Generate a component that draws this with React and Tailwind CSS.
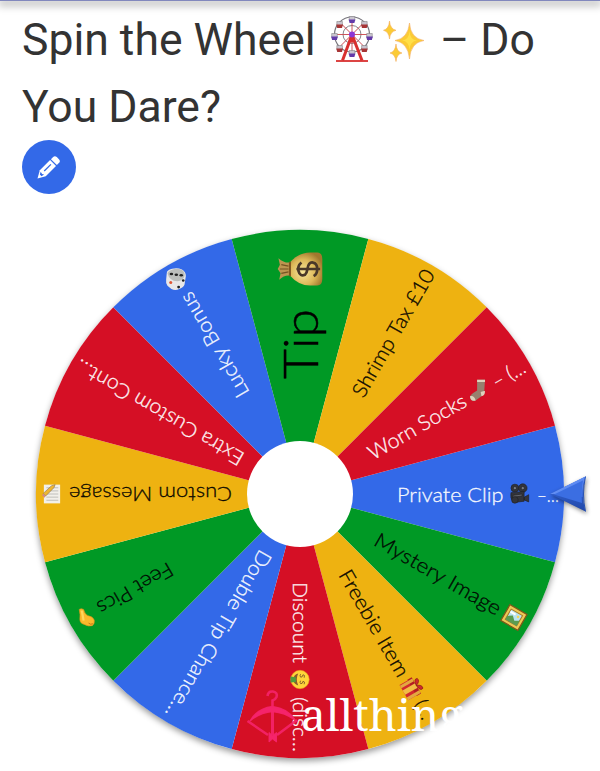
import React from "react";

const BLUE = "#3369e8";
const GREEN = "#009925";
const YELLOW = "#eeb211";
const RED = "#d50f25";

const RADIUS = 264;

// from / to are distances from the hub along the slice's centre line
const slices = [
  { angle: 0, color: BLUE, parts: [{ text: "Private Clip", from: 97, to: 203.5 }, { text: "–…", from: 237, to: 259 }], icon: { Art: Camera, at: 219.5, size: 21 } },
  { angle: 30, color: GREEN, parts: [{ text: "Mystery Image", from: 88, to: 231 }], icon: { Art: Picture, at: 247, size: 21 } },
  { angle: 60, color: YELLOW, parts: [{ text: "Freebie Item", from: 89, to: 209 }, { text: "(…", from: 239, to: 258 }], icon: { Art: Gift, at: 224, size: 20 } },
  { angle: 90, color: RED, parts: [{ text: "Discount", from: 88, to: 169 }, { text: "(disc…", from: 203, to: 258 }], icon: { Art: MoneyFace, at: 185.5, size: 19 } },
  { angle: 120, color: BLUE, parts: [{ text: "Double Tip Chance…", from: 67, to: 258 }] },
  { angle: 150, color: GREEN, parts: [{ text: "Feet Pics", from: 148, to: 232 }], icon: { Art: Foot, at: 247, size: 20 } },
  { angle: 180, color: YELLOW, parts: [{ text: "Custom Message", from: 68, to: 231 }], icon: { Art: Memo, at: 248, size: 20 } },
  { angle: 210, color: RED, parts: [{ text: "Extra Custom Cont…", from: 67, to: 258 }] },
  { angle: 240, color: BLUE, parts: [{ text: "Lucky Bonus", from: 113, to: 231 }], icon: { Art: Dice, at: 248, size: 21 } },
  { angle: 270, color: GREEN, parts: [{ text: "Tip", from: 115, to: 185, big: true }], icon: { Art: MoneyBag, at: 225, size: 46 } },
  { angle: 300, color: YELLOW, parts: [{ text: "Shrimp Tax £10", from: 114, to: 258 }] },
  { angle: 330, color: RED, parts: [{ text: "Worn Socks", from: 80, to: 190 }, { text: "– (…", from: 223, to: 258 }], icon: { Art: Sock, at: 207, size: 23 } },
];

const rad = (deg) => (deg * Math.PI) / 180;

export default function App() {
  return (
    <div className="w-[600px] h-[771px] overflow-hidden bg-white flex flex-col font-[Roboto,sans-serif]">
      <div className="h-px shrink-0 bg-[#8288bd] shadow-[0_2px_8px_2px_rgba(0,0,0,0.35)]" />

      <header className="h-[213px] shrink-0 pl-[22px] pt-1.5">
        <h1 className="text-[44.5px] leading-[67px] text-[#333] whitespace-nowrap">
          <span className="flex items-center">
            <span className="w-[309px]">Spin the Wheel</span>
            <FerrisWheel />
            <Sparkles />
            <span className="ml-[15px]">– Do</span>
          </span>
          <span className="block">You Dare?</span>
        </h1>
        <button className="block -mt-px w-[54px] h-[54px] rounded-full bg-[#3369e8] cursor-pointer" aria-label="Edit">
          <PencilIcon />
        </button>
      </header>

      <main className="h-[557px] shrink-0">
        <Wheel />
      </main>
    </div>
  );
}

function Wheel() {
  return (
    <svg width="600" height="557" viewBox="0 214 600 557" className="block">
      <defs>
        <linearGradient id="pointerTop" x1="0" y1="0" x2="1" y2="1">
          <stop offset="0" stopColor="#7fa6fb" />
          <stop offset="1" stopColor="#3f72ea" />
        </linearGradient>
        <linearGradient id="pointerBottom" x1="0" y1="0" x2="0" y2="1">
          <stop offset="0" stopColor="#396bdf" />
          <stop offset="1" stopColor="#2148a8" />
        </linearGradient>
        <radialGradient id="gold" cx="0.4" cy="0.4" r="0.65">
          <stop offset="0" stopColor="#f8e79a" />
          <stop offset="0.6" stopColor="#dcb858" />
          <stop offset="1" stopColor="#a1782e" />
        </radialGradient>
      </defs>

      <g transform="translate(300 494)">
        <circle r={RADIUS} fill="#fff" className="drop-shadow-[0_3px_3px_rgba(0,0,0,0.4)]" />
        {slices.map((s) => (
          <Slice key={s.angle} slice={s} />
        ))}
        <circle r="53" fill="#fff" />
      </g>

      <Pointer />
      <Watermark />
    </svg>
  );
}

function Slice({ slice }) {
  const { angle, color, parts, icon } = slice;
  const x = RADIUS * Math.cos(rad(15));
  const y = RADIUS * Math.sin(rad(15));
  const ink = color === BLUE || color === RED ? "#fff" : "#000";

  return (
    <g transform={`rotate(${angle})`}>
      <path d={`M0 0L${x} ${-y}A${RADIUS} ${RADIUS} 0 0 1 ${x} ${y}Z`} fill={color} />
      {parts.map((p) => (
        <text
          key={p.text}
          x={p.from}
          y={p.big ? 18 : 7.5}
          fill={ink}
          fillOpacity={p.big ? 1 : 0.92}
          stroke={ink}
          strokeWidth={p.big ? 0.5 : 0.3}
          fontSize={p.big ? 48 : 20.5}
          textLength={p.to - p.from}
          lengthAdjust="spacingAndGlyphs"
          className="font-[Lato,sans-serif] font-light"
        >
          {p.text}
        </text>
      ))}
      {icon && (
        <g transform={`translate(${icon.at} 0) scale(${icon.size / 32})`}>
          <icon.Art />
        </g>
      )}
    </g>
  );
}

function Pointer() {
  return (
    <g className="drop-shadow-[1px_2px_2px_rgba(0,0,0,0.45)]">
      <path d="M550 494L585.500 476.500Q580.500 494 585.500 511.500Z" fill="url(#pointerBottom)" />
      <path d="M550 494L585.500 476.500Q582 485 582.500 497Q568 494 550 494Z" fill="url(#pointerTop)" />
      <path d="M554 494.500L583 480.500Q581 491 582 503Z" fill="#3b6ee2" />
      <path d="M585.500 476.500Q581.500 494 585.500 511.500" fill="none" stroke="#2450b5" strokeWidth="1" />
    </g>
  );
}

function Watermark() {
  return (
    <g>
      <g fill="none" stroke="#f5246b" strokeOpacity="0.9" strokeWidth="2.2">
        <path d="M267.500 696Q268 691 273 691.500Q278 692.500 276.500 697Q275.500 699.500 272.500 700.500V706" strokeWidth="2.6" />
        <path d="M250 721Q257 708.500 272.500 706.500Q288 708.500 295 720Q285 712.500 272.500 711.500Q260 712.500 250 721Z" fill="#f5246b" strokeWidth="1.5" />
        <path d="M247.500 721L268 735M297 720L277 735" strokeWidth="2.500" />
        <path d="M272.500 711V735" strokeWidth="3" />
        <path d="M269 732.500L272.500 735.500L276.500 732.500V742L272.500 739L269 742Z" fill="#f5246b" strokeWidth="1" />
      </g>
      <text x="301" y="730.500" fill="#fff" fontSize="43" textLength="162" lengthAdjust="spacingAndGlyphs" className="font-['Noto_Serif','DejaVu_Serif',serif]">
        allthing
      </text>
    </g>
  );
}

function PencilIcon() {
  return (
    <svg viewBox="0 0 54 54" className="w-[54px] h-[54px]">
      <g transform="translate(15.500 38.500) rotate(-45)" fill="#fff">
        <path d="M0 0L7.500 -4.200H22V4.200H7.500Z" />
        <path d="M23.200 -4.200H26Q28.800 -4.200 28.800 -1.500V1.500Q28.800 4.200 26 4.200H23.200Z" />
        <path d="M10 -0.500H19.500" stroke="#3369e8" strokeWidth="1.300" />
        <path d="M4.500 -1.200L7 -2.500L6.500 0L7.500 1.800L4.500 1.200Z" fill="#3369e8" />
      </g>
    </svg>
  );
}

/* ---- Title pictures ---- */

function FerrisWheel() {
  const cabins = [0, 45, 90, 135, 180, 225, 270, 315];
  return (
    <svg viewBox="0 0 42 48" className="w-[42px] h-[48px] -mt-1">
      <g fill="none" stroke="#77757c">
        <circle cx="21" cy="19.500" r="17.500" strokeWidth="1.200" />
        <circle cx="21" cy="19.500" r="9" strokeWidth="0.900" />
      </g>
      {cabins.map((a) => (
        <path key={a} d="M21 19.500V3" stroke="#c8444a" strokeWidth="0.900" transform={`rotate(${a} 21 19.500)`} />
      ))}
      <path d="M20.500 21L11.500 45.500M21.500 21L31 45.500" stroke="#d8302f" strokeWidth="3" />
      <path d="M15 33L21 21L27 33L23.500 27.500H18.500Z" fill="#d8302f" />
      <path d="M5 46H37" stroke="#d8302f" strokeWidth="1.800" />
      {cabins.map((a, i) => {
        const cx = 21 + 17.5 * Math.sin(rad(a));
        const cy = 21.5 - 17 * Math.cos(rad(a));
        return (
          <g key={a} transform={`translate(${cx} ${cy})`}>
            <path d="M-2.800 -3H2.800V1H-2.800Z" fill="#c9c4cf" stroke="#777" strokeWidth="0.500" />
            <path d="M-3.300 0H3.300L2.400 3.500H-2.400Z" fill={i % 2 ? "#a73536" : "#633aa9"} />
          </g>
        );
      })}
      <circle cx="21" cy="19.500" r="3" fill="#8c35d5" />
    </svg>
  );
}

function Sparkles() {
  return (
    <svg viewBox="0 0 42 42" className="ml-[10px] w-[42px] h-[42px]">
      <g fill="#fbcb35" stroke="#f3ad62" strokeWidth="0.600">
        <path d="M26.500 3Q27.500 18.500 41 20.500Q27.500 22.500 26.500 39Q25 22.500 12 20.500Q25 18.500 26.500 3Z" />
        <path d="M6.500 1Q7.200 9 13 10.300Q7.200 11.600 6.500 19Q5.800 11.600 0.500 10.300Q5.800 9 6.500 1Z" />
        <path d="M13 24Q13.500 31.700 19 33Q13.500 34.300 13 41.500Q12.300 34.300 7 33Q12.300 31.700 13 24Z" />
      </g>
      <path d="M26.500 11Q27 20 34 20.500Q27 21 26.500 30Q26 21 19 20.500Q26 20 26.500 11Z" fill="#ffdf49" />
    </svg>
  );
}

/* ---- Slice pictures, each drawn in a 32 unit box around 0,0 ---- */

function Camera() {
  return (
    <g fill="#33343a" stroke="#202126">
      <circle cx="-7" cy="-9" r="6" />
      <circle cx="5" cy="-9" r="6.500" />
      <circle cx="-7" cy="-9" r="2.500" fill="#777b82" />
      <circle cx="5" cy="-9" r="2.500" fill="#777b82" />
      <path d="M-13 -2L7 -4V11L-9 13Q-15 6 -13 -2ZM7 5L14 1V12L7 9Z" />
      <path d="M-10 2L4 0V3L-10 5Z" fill="#64666d" />
      <circle cx="-7" cy="9" r="5" />
    </g>
  );
}

function Picture() {
  return (
    <g>
      <path d="M-15 -14H15V14H-15Z" fill="#edc855" stroke="#7c5819" strokeWidth="2" />
      <path d="M-10 -9H10V9H-10Z" fill="#b9e4f2" stroke="#a57a22" strokeWidth="1.500" />
      <path d="M-10 9V3L-3 -2L3 4L10 0V9Z" fill="#5a9c50" />
      <path d="M-9 -5H0" stroke="#fff" strokeWidth="3" />
      <circle cx="5" cy="-4" r="2" fill="#f5d75a" />
    </g>
  );
}

function Gift() {
  return (
    <g>
      <path d="M-14 -4H14V15H-14Z" fill="#d3292c" />
      <path d="M-15 -8H15V0H-15Z" fill="#b31e22" />
      <path d="M-4 -8H4V15H-4Z" fill="#f1bd44" />
      <path d="M9 -8H14V15H9ZM-13 -8H-8V15H-13Z" fill="#e3a840" />
      <path d="M0 -8Q-12 -9 -9 -15Q-3 -17 0 -8Q3 -17 9 -15Q12 -9 0 -8Z" fill="#cf292c" stroke="#851818" strokeWidth="1" />
    </g>
  );
}

function MoneyFace() {
  return (
    <g>
      <circle r="15.500" fill="#ffd43a" stroke="#e8a51e" strokeWidth="1" />
      <path d="M-10 3Q0 8 10 3Q8 11 0 11Q-8 11 -10 3Z" fill="#8a5c2d" />
      <path d="M-4 7H4L5 16H-5Z" fill="#4f9d3d" />
      <path d="M-3 -7Q-8 -9 -8 -5Q-3 -4 -4 -1Q-6 1 -9 -1M8 -7Q3 -9 3 -5Q8 -4 7 -1Q5 1 2 -1" fill="none" stroke="#7c5829" strokeWidth="1.500" />
    </g>
  );
}

function Foot() {
  return (
    <g transform="rotate(-150)">
      <path d="M-11 -13Q-8 -15 -4 -13Q-2 -5 3 -3Q11 -2 13 4Q14 10 10 13Q4 15 -3 11Q-10 9 -10 3Q-9 -5 -11 -13Z" fill="#f9b92c" stroke="#dd901b" strokeWidth="1" />
      <path d="M-7 -11Q-5 -2 -4 5" stroke="#ffd65c" strokeWidth="3.500" fill="none" />
      <path d="M4 9Q7 12 11 10" stroke="#bd741a" strokeWidth="1.500" fill="none" />
    </g>
  );
}

function Memo() {
  return (
    <g>
      <path d="M-13 -15H13V15H-13Z" fill="#f2f0ea" />
      <path d="M-10 -10H9M-10 -5H9M-10 0H9M-10 5H9M-10 10H9" stroke="#bcbcb9" strokeWidth="1.500" />
      <path d="M-3 7L10 -6L14 -2L1 10L-5 12Z" transform="translate(0 3)" fill="#edb733" stroke="#8b7250" strokeWidth="1" />
      <path d="M10 -3L14 1L16 -2L12 -6Z" fill="#d48b80" />
    </g>
  );
}

function Dice() {
  return (
    <g transform="rotate(120)">
      <path d="M-14 -10Q-14 -14 -6 -16Q2 -18 9 -15Q15 -12 15 -5L13 8Q12 12 5 15Q-1 18 -7 15L-13 10Q-16 6 -15 0Z" fill="#e9e8e8" />
      <path d="M-13 -9Q-12 -13 -5 -15Q2 -17 9 -14Q14 -11 13 -5Q11 2 2 3Q-10 3 -13 -9Z" fill="#bcbebc" />
      <g fill="#222">
        <ellipse cx="-7" cy="-8" rx="2.700" ry="1.900" />
        <ellipse cx="0.500" cy="-7" rx="2.700" ry="1.900" />
        <ellipse cx="8" cy="-6" rx="2.700" ry="1.900" />
        <circle cx="11" cy="2" r="2" />
        <circle cx="4" cy="12" r="2.200" />
      </g>
      <circle cx="-8" cy="5" r="2.300" fill="#df5636" />
    </g>
  );
}

// lies along the slice, so its neck points towards -y before the slice rotates it
function MoneyBag() {
  return (
    <g>
      <path d="M-4.500 -7Q-4 -11 -7.500 -14.500L-3 -13.500L0 -15.500L3 -14L7.500 -15Q4 -11 4.500 -7Z" fill="#bd9550" />
      <path d="M-4.500 -7H4.500Q11.500 -1 11.500 7V12Q11.500 15.500 7 15.500H-7Q-11.500 15.500 -11.500 12V7Q-11.500 -1 -4.500 -7Z" fill="url(#gold)" />
      <path d="M-3 -13L-2 -8M0 -14V-8M3 -13L2 -8" stroke="#755322" strokeWidth="0.800" />
      <path d="M-5 -7H5" stroke="#80561f" strokeWidth="1.400" />
      <path d="M4.500 1Q2 -2 -1.500 -1Q-5.500 0 -4 3.500Q-3 4.700 0 5.200Q5 5.700 4.500 9Q4 12 0 12Q-3.500 12 -5 9.500M0 -2.500V14" fill="none" stroke="#4a3929" strokeWidth="1.900" />
    </g>
  );
}

function Sock() {
  return (
    <g transform="rotate(30)">
      <path d="M-3 -15H8L7 0Q8 5 3 8L-5 14Q-12 16 -13 9Q-13 6 -3 0Z" fill="#97806e" />
      <path d="M-3 -15H8V-12H-3ZM2 2Q8 0 8 1Q8 7 3 8ZM-13 8Q-7 6 -5 14Q-12 16 -13 8Z" fill="#ded1bc" />
    </g>
  );
}
